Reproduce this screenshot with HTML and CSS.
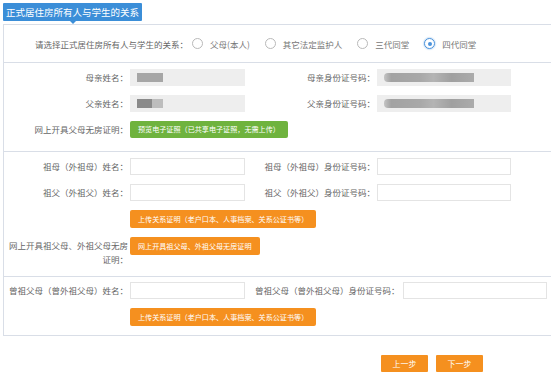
FILE: index.html
```html
<!DOCTYPE html>
<html>
<head>
<title>正式居住房所有人与学生的关系</title>
<link rel="stylesheet" href="styles.css">
</head>
<body>
<div class="page">
  <div class="tab-title">正式居住房所有人与学生的关系</div>
  <div class="panel">
    <div class="radio-row">
      <span class="prompt">请选择正式居住房所有人与学生的关系：</span>
      <label class="option"><span class="radio"></span>父母(本人)</label>
      <label class="option"><span class="radio"></span>其它法定监护人</label>
      <label class="option"><span class="radio"></span>三代同堂</label>
      <label class="option"><span class="radio checked"></span>四代同堂</label>
    </div>

    <div class="section">
      <div class="field-row">
        <span class="label">母亲姓名：</span>
        <div class="input readonly"><span class="mask mask-name"></span></div>
        <span class="label label-r">母亲身份证号码：</span>
        <div class="input input-wide readonly"><span class="mask mask-id"></span></div>
      </div>
      <div class="field-row">
        <span class="label">父亲姓名：</span>
        <div class="input readonly"><span class="mask mask-name2"></span></div>
        <span class="label label-r">父亲身份证号码：</span>
        <div class="input input-wide readonly"><span class="mask mask-id"></span></div>
      </div>
      <div class="field-row">
        <span class="label">网上开具父母无房证明：</span>
        <button class="btn btn-green">预览电子证照（已共享电子证照，无需上传）</button>
      </div>
    </div>

    <div class="section section-3">
      <div class="field-row">
        <span class="label">祖母（外祖母）姓名：</span>
        <div class="input"></div>
        <span class="label label-r">祖母（外祖母）身份证号码：</span>
        <div class="input input-wide"></div>
      </div>
      <div class="field-row">
        <span class="label">祖父（外祖父）姓名：</span>
        <div class="input"></div>
        <span class="label label-r">祖父（外祖父）身份证号码：</span>
        <div class="input input-wide"></div>
      </div>
      <div class="field-row">
        <span class="label"></span>
        <button class="btn btn-orange">上传关系证明（老户口本、人事档案、关系公证书等）</button>
      </div>
      <div class="field-row tall">
        <span class="label label-wrap">网上开具祖父母、外祖父母无房证明：</span>
        <button class="btn btn-orange">网上开具祖父母、外祖父母无房证明</button>
      </div>
    </div>

    <div class="section section-4">
      <div class="field-row">
        <span class="label">曾祖父母（曾外祖父母）姓名：</span>
        <div class="input"></div>
        <span class="label label-auto">曾祖父母（曾外祖父母）身份证号码：</span>
        <div class="input input-long"></div>
      </div>
      <div class="field-row">
        <span class="label"></span>
        <button class="btn btn-orange">上传关系证明（老户口本、人事档案、关系公证书等）</button>
      </div>
    </div>
  </div>

  <div class="actions">
    <button class="btn-step">上一步</button>
    <button class="btn-step">下一步</button>
  </div>
</div>
</body>
</html>
```

FILE: styles.css
```css
body {
  margin: 0;
  font-family: "Noto Sans CJK SC", "Noto Sans", sans-serif;
  font-size: 8.5px;
  color: #666;
  background-color: white;
  overflow: hidden;
}
.page {
  padding-top: 3px;
}
.tab-title {
  position: relative;
  display: inline-block;
  margin-left: 3px;
  padding: 0 3px;
  height: 18px;
  line-height: 18px;
  font-size: 9.5px;
  color: white;
  background-color: #3b8ed8;
  border-radius: 1px;
}
.tab-title::after {
  content: "";
  position: absolute;
  left: 67px;
  top: 18px;
  border: 3px solid transparent;
  border-top-color: #3b8ed8;
}
.panel {
  margin: 3px 0 0 3px;
  width: 547px;
  border: 1px solid #d9dee7;
  border-right: none;
}
.radio-row {
  display: flex;
  align-items: center;
  height: 37px;
  padding-left: 31px;
}
.prompt {
  margin-right: 4px;
}
.option {
  display: flex;
  align-items: center;
  gap: 7px;
  margin-right: 15px;
  color: #777;
}
.radio {
  width: 9px;
  height: 9px;
  border: 1px solid #b9b9b9;
  border-radius: 50%;
  background: white;
}
.radio.checked {
  position: relative;
  border-color: #4b93dc;
  box-shadow: 0 0 1px 1px rgba(75,147,220,0.25);
}
.radio.checked::after {
  content: "";
  position: absolute;
  left: 2.5px;
  top: 2.5px;
  width: 4px;
  height: 4px;
  border-radius: 50%;
  background: #4b93dc;
}
.section {
  display: flex;
  flex-direction: column;
  gap: 9px;
  padding: 6px 0 13px;
  border-top: 1px solid #d9dee7;
}
.section-3 {
  padding-bottom: 10px;
}
.section-4 {
  padding: 5px 0 9px;
}
.field-row {
  display: flex;
  align-items: center;
  min-height: 17px;
}
.field-row.tall {
  align-items: flex-start;
}
.label {
  flex: none;
  width: 124px;
  text-align: right;
  line-height: 17px;
}
.label-wrap {
  line-height: 14px;
  margin-top: 1px;
}
.label-r {
  width: 130px;
}
.label-auto {
  width: auto;
  margin-left: 10px;
}
.input {
  flex: none;
  box-sizing: border-box;
  width: 115px;
  height: 17px;
  margin-left: 2px;
  border: 1px solid #e4e4e4;
  background: white;
}
.input-wide {
  width: 134px;
}
.input-long {
  width: 144px;
  margin-left: 3px;
}
.input.readonly {
  border-color: #eee;
  background: #eeeeee;
}
.mask {
  display: block;
  height: 9px;
  margin: 3px 0 0 6px;
  filter: blur(0.7px);
}
.mask-name {
  width: 26px;
  background: #a6a6a6;
}
.mask-name2 {
  width: 26px;
  background: linear-gradient(to right, #8a8a8a 0, #8a8a8a 58%, #bdbdbd 58%);
}
.mask-id {
  width: 90px;
  border-radius: 4px 0 0 4px;
  background: linear-gradient(to right, #c4c4c4 0, #a2a2a2 8%, #a8a8a8 40%, #b4b4b4 55%, #a0a0a0 75%, #ababab 100%);
}
.btn {
  flex: none;
  margin-left: 2px;
  padding: 0 8px;
  height: 18px;
  line-height: 18px;
  border: none;
  border-radius: 2px;
  font-family: inherit;
  font-size: 7.1px;
  color: white;
  cursor: pointer;
}
.btn-green {
  height: 17px;
  line-height: 17px;
  background-color: #6fb33e;
}
.btn-orange {
  background-color: #f5901f;
}
.actions {
  display: flex;
  gap: 8px;
  margin-top: 19px;
  padding-left: 381px;
}
.btn-step {
  width: 47px;
  height: 17px;
  padding: 0;
  border: none;
  border-radius: 1px;
  font-family: inherit;
  font-size: 8px;
  color: white;
  background-color: #f5901f;
  cursor: pointer;
}
```
